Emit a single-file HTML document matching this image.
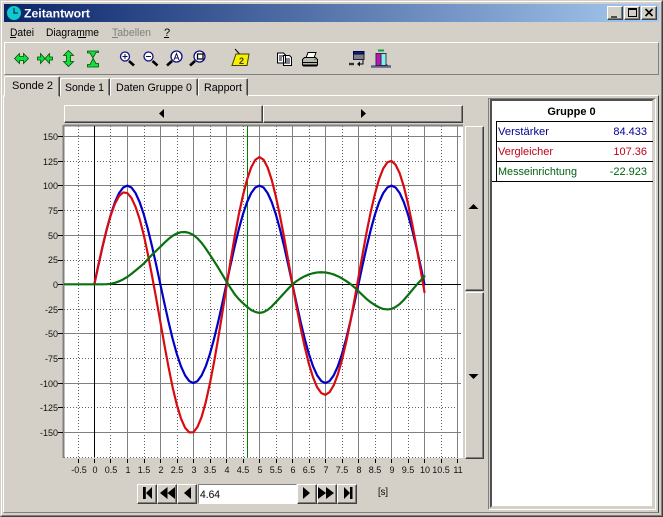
<!DOCTYPE html>
<html><head><meta charset="utf-8"><style>
html,body{margin:0;padding:0;width:663px;height:517px;overflow:hidden;background:#d4d0c8}
div{position:absolute;box-sizing:border-box}
.b{background:#d4d0c8;border:1px solid;border-color:#fff #404040 #404040 #fff;box-shadow:inset -1px -1px #808080}
.t{background:#d4d0c8;border:1px solid;border-color:#fff #404040 #d4d0c8 #fff;box-shadow:inset -1px 0 #808080;border-radius:2px 2px 0 0}
svg{position:absolute;left:0;top:0}
text{font-family:"Liberation Sans",sans-serif;font-size:11px}
.a text{font-size:9px;text-anchor:middle;fill:#111}
.y text{font-size:9px;text-anchor:end;fill:#111}
</style></head><body>
<div style="left:0;top:0;width:663px;height:517px;border:1px solid;border-color:#d4d0c8 #404040 #404040 #d4d0c8"></div>
<div style="left:1px;top:1px;width:661px;height:515px;border:1px solid;border-color:#fff #808080 #808080 #fff"></div>
<div style="left:4px;top:4px;width:655px;height:18px;background:linear-gradient(90deg,#0a246a,#a6caf0)"></div>
<div class="b" style="left:607px;top:6px;width:16px;height:14px"></div>
<div class="b" style="left:624px;top:6px;width:16px;height:14px"></div>
<div class="b" style="left:641px;top:6px;width:16px;height:14px"></div>
<div style="left:4px;top:42px;width:655px;height:33px;border:1px solid;border-color:#fff #808080 #808080 #fff"></div>
<div style="left:3px;top:95px;width:656px;height:418px;border:1px solid;border-color:#fff #404040 #808080 #fff"></div>
<div class="t" style="left:4px;top:76px;width:56px;height:21px"></div>
<div class="t" style="left:60px;top:78px;width:50px;height:18px"></div>
<div class="t" style="left:110px;top:78px;width:88px;height:18px"></div>
<div class="t" style="left:198px;top:78px;width:50px;height:18px"></div>
<div class="b" style="left:64px;top:105px;width:199px;height:18px"></div>
<div class="b" style="left:263px;top:105px;width:200px;height:18px"></div>
<div style="left:64px;top:125px;width:399px;height:333px;background:#fff"></div>
<div class="b" style="left:465px;top:126px;width:19px;height:165px"></div>
<div class="b" style="left:465px;top:292px;width:19px;height:167px"></div>
<div style="left:488px;top:98px;width:168px;height:412px;border:1px solid;border-color:#808080 #fff #fff #808080"></div>
<div style="left:490px;top:99px;width:164px;height:409px;background:#fff;border:2px solid;border-color:#505050 #d4d0c8 #d4d0c8 #505050"></div>
<div class="b" style="left:137px;top:484px;width:20px;height:20px"></div>
<div class="b" style="left:157px;top:484px;width:20px;height:20px"></div>
<div class="b" style="left:177px;top:484px;width:20px;height:20px"></div>
<div style="left:198px;top:484px;width:99px;height:20px;background:#fff;border:1px solid;border-color:#808080 #fff #fff #808080"></div>
<div class="b" style="left:297px;top:484px;width:20px;height:20px"></div>
<div class="b" style="left:317px;top:484px;width:20px;height:20px"></div>
<div class="b" style="left:337px;top:484px;width:20px;height:20px"></div>

<svg width="663" height="517" viewBox="0 0 663 517">
<!-- title -->
<circle cx="14" cy="13" r="7.5" fill="#10c8d0" stroke="#083050"/>
<path d="M14 8V13H18" fill="none" stroke="#043050" stroke-width="1.2"/>
<text x="24" y="17.5" fill="#fff" font-weight="bold" style="font-size:12px" textLength="66" lengthAdjust="spacingAndGlyphs">Zeitantwort</text>
<path d="M611 17h6" stroke="#505050" stroke-width="2"/>
<path d="M628.500 8.500h8v8h-8zM628 9.500h8" fill="none" stroke="#000"/>
<path d="M645.500 9l7 7M652.500 9l-7 7" stroke="#000" stroke-width="1.600"/>
<!-- menu -->
<text x="10" y="36" textLength="24" lengthAdjust="spacingAndGlyphs">Datei</text><path d="M10 37.500h6" stroke="#000"/>
<text x="46" y="36" textLength="53" lengthAdjust="spacingAndGlyphs">Diagramme</text><path d="M78 37.500h8" stroke="#000"/>
<text x="112" y="36" fill="#808080" textLength="39" lengthAdjust="spacingAndGlyphs">Tabellen</text><path d="M112 37.500h6" stroke="#808080"/>
<text x="164" y="36">?</text><path d="M164 37.500h5" stroke="#000"/>
<!-- green arrows -->
<g fill="#10e040" stroke="#005000" stroke-width=".8">
<path d="M14.500 58.500l5-5v3h4v-3l5 5-5 5v-3h-4v3z"/>
<path d="M37.500 57h3v-3.500l4.500 5-4.500 5v-3.500h-3zM52.500 57h-3v-3.500l-4.500 5 4.500 5v-3.500h3z"/>
<path d="M68.500 50.500l5 5h-3v6h3l-5 5-5-5h3v-6h-3z"/>
<path d="M87.500 51h11v1.500h-2.500l-3.250 5.500 3.250 5.500h2.500V67h-11v-2.500h2.500l3.250-6-3.250-5.500h-2.500z"/>
</g>
<!-- magnifiers -->
<g fill="#fff" stroke="#101080" stroke-width="1.300">
<path d="M129 61l5 4.500" stroke="#000" stroke-width="2.600"/><circle cx="125" cy="56.500" r="4.500"/><path d="M122.500 56.500h5M125 54v5" stroke="#101040" stroke-width="1" fill="none"/>
<path d="M152.500 61l5 4.500" stroke="#000" stroke-width="2.600"/><circle cx="148.500" cy="56.500" r="4.500"/><path d="M146 56.500h5" stroke="#101040" stroke-width="1" fill="none"/>
<path d="M172 61l-5 4.500" stroke="#000" stroke-width="2.600"/><circle cx="176.500" cy="56.500" r="5.500"/><path d="M174 60l2.500-6.500 2.500 6.500M175 58h3" fill="none" stroke="#101040" stroke-width="1"/>
<path d="M195 61l-5 4.500" stroke="#000" stroke-width="2.600"/><circle cx="199.500" cy="56.500" r="5.500"/><path d="M197.500 54h5.500v5h-5.500z" fill="#fff" stroke="#000"/>
</g>
<!-- folder -->
<path d="M235 49l5 5.500" stroke="#000" stroke-width="1" fill="none"/>
<path d="M236 54h13l-2 11.500h-15z" fill="#f8f000" stroke="#404000"/>
<text x="239" y="64" style="font-size:9px;font-weight:bold" fill="#404000">2</text>
<!-- copy -->
<path d="M277.500 53h6l2 2v8h-8zM283.500 55.500h6l2 2v8h-8z" fill="#fff" stroke="#000"/>
<path d="M279 56h4M279 58h3M279 60h3M285 59h5M285 61h5M285 63h5" stroke="#000020"/>
<!-- printer -->
<path d="M306 58l2-5.500h8l-2 5.500z" fill="#fff" stroke="#000"/>
<path d="M302.500 59.500l2-2h11l2 2v5.500l-1 1h-13l-1-1z" fill="#b8b8b0" stroke="#000"/>
<path d="M303 62.500h14M303 65h14" stroke="#000"/><path d="M314 59.500h2" stroke="#10c010"/>
<!-- window -->
<path d="M353.500 51.500h10.500v8h-10.500z" fill="#808080" stroke="#202040"/><path d="M353.500 51.500h10.500v2.500h-10.500z" fill="#102080" stroke="#000040"/>
<path d="M349 64h5" stroke="#303030" stroke-width="2.400"/>
<path d="M363 60v4h-4" fill="none" stroke="#000"/><path d="M360 61.500l-3 2.500 3 2.500z" fill="#000"/>
<!-- coloured -->
<path d="M371 66.500h20" stroke="#606090" stroke-width="2.500"/>
<path d="M376 53.500h5v12h-5z" fill="#c010c0" stroke="#303030"/><path d="M381 53.500h5v12h-5z" fill="#80f0f0" stroke="#303030"/>
<path d="M378 50.500h6" stroke="#10a040" stroke-width="2"/>
<path d="M386 54v10l2 2" stroke="#404040" fill="none"/>
<!-- tabs -->
<text x="12" y="89" fill="#000" textLength="41" lengthAdjust="spacingAndGlyphs">Sonde 2</text>
<text x="65" y="91" textLength="39" lengthAdjust="spacingAndGlyphs">Sonde 1</text>
<text x="116" y="91" textLength="76" lengthAdjust="spacingAndGlyphs">Daten Gruppe 0</text>
<text x="204" y="91" textLength="38" lengthAdjust="spacingAndGlyphs">Rapport</text>
<!-- scroll arrows -->
<path d="M164 109v9l-5-4.500zM361 109v9l5-4.500zM473.500 204l-5 5h10zM473.500 379l-5-5h10z" fill="#000"/>
<!-- grid -->
<path d="M63.500 125V458M64 125.500H463" stroke="#808080" stroke-width="2" fill="none"/>
<path d="M78.500 126V457M110.500 126V457M144.500 126V457M177.500 126V457M210.500 126V457M243.500 126V457M276.500 126V457M309.500 126V457M342.500 126V457M375.500 126V457M408.500 126V457M441.500 126V457M64 161.500H459M64 210.500H459M64 260.500H459M64 309.500H459M64 358.500H459M64 407.500H459M64 457.500H459" stroke="#606060" stroke-dasharray="1 2" fill="none"/>
<path d="M127.500 126V457M160.500 126V457M193.500 126V457M226.500 126V457M259.500 126V457M292.500 126V457M325.500 126V457M358.500 126V457M391.500 126V457M424.500 126V457M457.500 126V457M64 136.500H461M64 185.500H461M64 235.500H461M64 333.500H461M64 383.500H461M64 432.500H461" stroke="#808080" fill="none"/>
<path d="M94.500 126V457M64 284.500H461" stroke="#000" fill="none"/>
<path d="M247.500 126V457" stroke="#008000" fill="none"/>
<g transform="translate(94.300,284.300) scale(33.020,-0.9867)" fill="none" stroke-width="2.200" stroke-linejoin="round" stroke-linecap="round">
<polyline vector-effect="non-scaling-stroke" stroke="#0000c8" points="0,0 .125,19.51 .25,38.27 .375,55.56 .5,70.71 .625,83.15 .75,92.39 .875,98.08 1,100 1.125,98.08 1.25,92.39 1.375,83.15 1.5,70.71 1.625,55.56 1.75,38.27 1.875,19.51 2,0 2.125,-19.51 2.25,-38.27 2.375,-55.56 2.5,-70.71 2.625,-83.15 2.75,-92.39 2.875,-98.08 3,-100 3.125,-98.08 3.25,-92.39 3.375,-83.15 3.5,-70.71 3.625,-55.56 3.75,-38.27 3.875,-19.51 4,0 4.125,19.51 4.25,38.27 4.375,55.56 4.5,70.71 4.625,83.15 4.75,92.39 4.875,98.08 5,100 5.125,98.08 5.25,92.39 5.375,83.15 5.5,70.71 5.625,55.56 5.75,38.27 5.875,19.51 6,0 6.125,-19.51 6.25,-38.27 6.375,-55.56 6.5,-70.71 6.625,-83.15 6.75,-92.39 6.875,-98.08 7,-100 7.125,-98.08 7.25,-92.39 7.375,-83.15 7.5,-70.71 7.625,-55.56 7.75,-38.27 7.875,-19.51 8,0 8.125,19.51 8.25,38.27 8.375,55.56 8.5,70.71 8.625,83.15 8.75,92.39 8.875,98.08 9,100 9.125,98.08 9.25,92.39 9.375,83.15 9.5,70.71 9.625,55.56 9.75,38.27 9.875,19.51 10,0"/>
<polyline vector-effect="non-scaling-stroke" stroke="#d80c10" points="0,0 .125,19.5 .25,38.3 .375,55.5 .5,70.2 .625,81.6 .75,89.4 .875,93.1 1,92.5 1.125,87.5 1.25,78.4 1.375,65.8 1.5,49.7 1.625,30.1 1.75,8.3 1.875,-14.5 2,-38 2.125,-61.7 2.25,-84.3 2.375,-104.8 2.5,-122.2 2.625,-136 2.75,-145.4 2.875,-150.1 3,-150 3.125,-144.6 3.25,-134.4 3.375,-119.5 3.5,-100.7 3.625,-79.2 3.75,-55.3 3.875,-29.5 4,-3 4.125,23.2 4.25,48.3 4.375,70.6 4.5,89.7 4.625,106 4.75,118.4 4.875,126.1 5,129 5.125,126.3 5.25,118.4 5.375,105.6 5.5,88.7 5.625,69.1 5.75,47.3 5.875,23.9 6,0 6.125,-22.7 6.25,-44.3 6.375,-63.8 6.5,-80.7 6.625,-94.4 6.75,-104.4 6.875,-110.3 7,-112 7.125,-109.3 7.25,-102.4 7.375,-91.4 7.5,-76.7 7.625,-59 7.75,-38.8 7.875,-16.5 8,7 8.125,30.5 8.25,53.3 8.375,73.9 8.5,91.7 8.625,106.6 8.75,117.4 8.875,123.6 9,125 9.125,121.1 9.25,112.4 9.375,99 9.5,81.7 9.625,61.6 9.75,39.3 9.875,15.9 10,-8"/>
<polyline vector-effect="non-scaling-stroke" stroke="#0a7010" points="-.9,0 0,0 .125,0 .25,0 .375,.1 .5,.5 .625,1.5 .75,3 .875,5 1,7.5 1.125,10.6 1.25,14 1.375,17.4 1.5,21 1.625,25.5 1.75,30 1.875,34 2,38 2.125,42.2 2.25,46 2.375,49.2 2.5,51.5 2.625,52.8 2.75,53 2.875,52 3,50 3.125,46.5 3.25,42 3.375,36.3 3.5,30 3.625,23.6 3.75,17 3.875,10 4,3 4.125,-3.7 4.25,-10 4.375,-15 4.5,-19 4.625,-22.8 4.75,-26 4.875,-28 5,-29 5.125,-28.2 5.25,-26 5.375,-22.4 5.5,-18 5.625,-13.5 5.75,-9 5.875,-4.4 6,0 6.125,3.2 6.25,6 6.375,8.2 6.5,10 6.625,11.2 6.75,12 6.875,12.2 7,12 7.125,11.2 7.25,10 7.375,8.2 7.5,6 7.625,3.4 7.75,.5 7.875,-3 8,-7 8.125,-11 8.25,-15 8.375,-18.3 8.5,-21 8.625,-23.4 8.75,-25 8.875,-25.5 9,-25 9.125,-23 9.25,-20 9.375,-15.8 9.5,-11 9.625,-6 9.75,-1 9.875,3.6 10,8"/>
</g>
<!-- ticks -->
<path d="M78.500 459v4M94.500 459v4M110.500 459v4M127.500 459v4M144.500 459v4M160.500 459v4M177.500 459v4M193.500 459v4M210.500 459v4M226.500 459v4M243.500 459v4M259.500 459v4M276.500 459v4M292.500 459v4M309.500 459v4M325.500 459v4M342.500 459v4M358.500 459v4M375.500 459v4M391.500 459v4M408.500 459v4M424.500 459v4M441.500 459v4M457.500 459v4M58 136.500h5M58 161.500h5M58 185.500h5M58 210.500h5M58 235.500h5M58 260.500h5M58 284.500h5M58 309.500h5M58 333.500h5M58 358.500h5M58 383.500h5M58 407.500h5M58 432.500h5" stroke="#000" fill="none"/>
<g class="a">
<text x="79" y="473">-0.5</text><text x="95" y="473">0</text><text x="111" y="473">0.5</text><text x="128" y="473">1</text><text x="144" y="473">1.5</text><text x="161" y="473">2</text><text x="177" y="473">2.5</text><text x="194" y="473">3</text><text x="210" y="473">3.5</text><text x="227" y="473">4</text><text x="243" y="473">4.5</text><text x="260" y="473">5</text><text x="276" y="473">5.5</text><text x="293" y="473">6</text><text x="309" y="473">6.5</text><text x="326" y="473">7</text><text x="342" y="473">7.5</text><text x="359" y="473">8</text><text x="375" y="473">8.5</text><text x="392" y="473">9</text><text x="408" y="473">9.5</text><text x="425" y="473">10</text><text x="441" y="473">10.5</text><text x="458" y="473">11</text>
</g>
<g class="y">
<text x="58" y="140">150</text><text x="58" y="165">125</text><text x="58" y="189">100</text><text x="58" y="214">75</text><text x="58" y="239">50</text><text x="58" y="263">25</text><text x="58" y="288">0</text><text x="58" y="313">-25</text><text x="58" y="337">-50</text><text x="58" y="362">-75</text><text x="58" y="387">-100</text><text x="58" y="411">-125</text><text x="58" y="436">-150</text>
</g>
<!-- nav -->
<path d="M143 487h2.800v12H143zM152 487v12l-6-6zM160 493l7.500-6v12zM167.500 493l7.500-6v12zM184 493l7-6v12zM303 487v12l7-6zM318 487v12l8-6zM326 487v12l8-6zM344 487v12l6-6zM350 487h2.500v12H350z" fill="#000"/>
<text x="200" y="498" textLength="20" lengthAdjust="spacingAndGlyphs">4.64</text>
<text x="378" y="495" style="font-size:10px" textLength="10" lengthAdjust="spacingAndGlyphs">[s]</text>
<!-- table -->
<path d="M496 121.500H653M496 141.500H653M496 161.500H653M492 181.500H653M496.500 121V181" stroke="#000" fill="none"/>
<text x="571.500" y="115" text-anchor="middle" font-weight="bold">Gruppe 0</text>
<text x="498" y="135" fill="#000090" textLength="51" lengthAdjust="spacingAndGlyphs">Verstärker</text>
<text x="647" y="135" fill="#000090" text-anchor="end">84.433</text>
<text x="498" y="155" fill="#c00018" textLength="55" lengthAdjust="spacingAndGlyphs">Vergleicher</text>
<text x="647" y="155" fill="#c00018" text-anchor="end">107.36</text>
<text x="498" y="175" fill="#006010" textLength="79" lengthAdjust="spacingAndGlyphs">Messeinrichtung</text>
<text x="647" y="175" fill="#006010" text-anchor="end">-22.923</text>
</svg>
</body></html>
